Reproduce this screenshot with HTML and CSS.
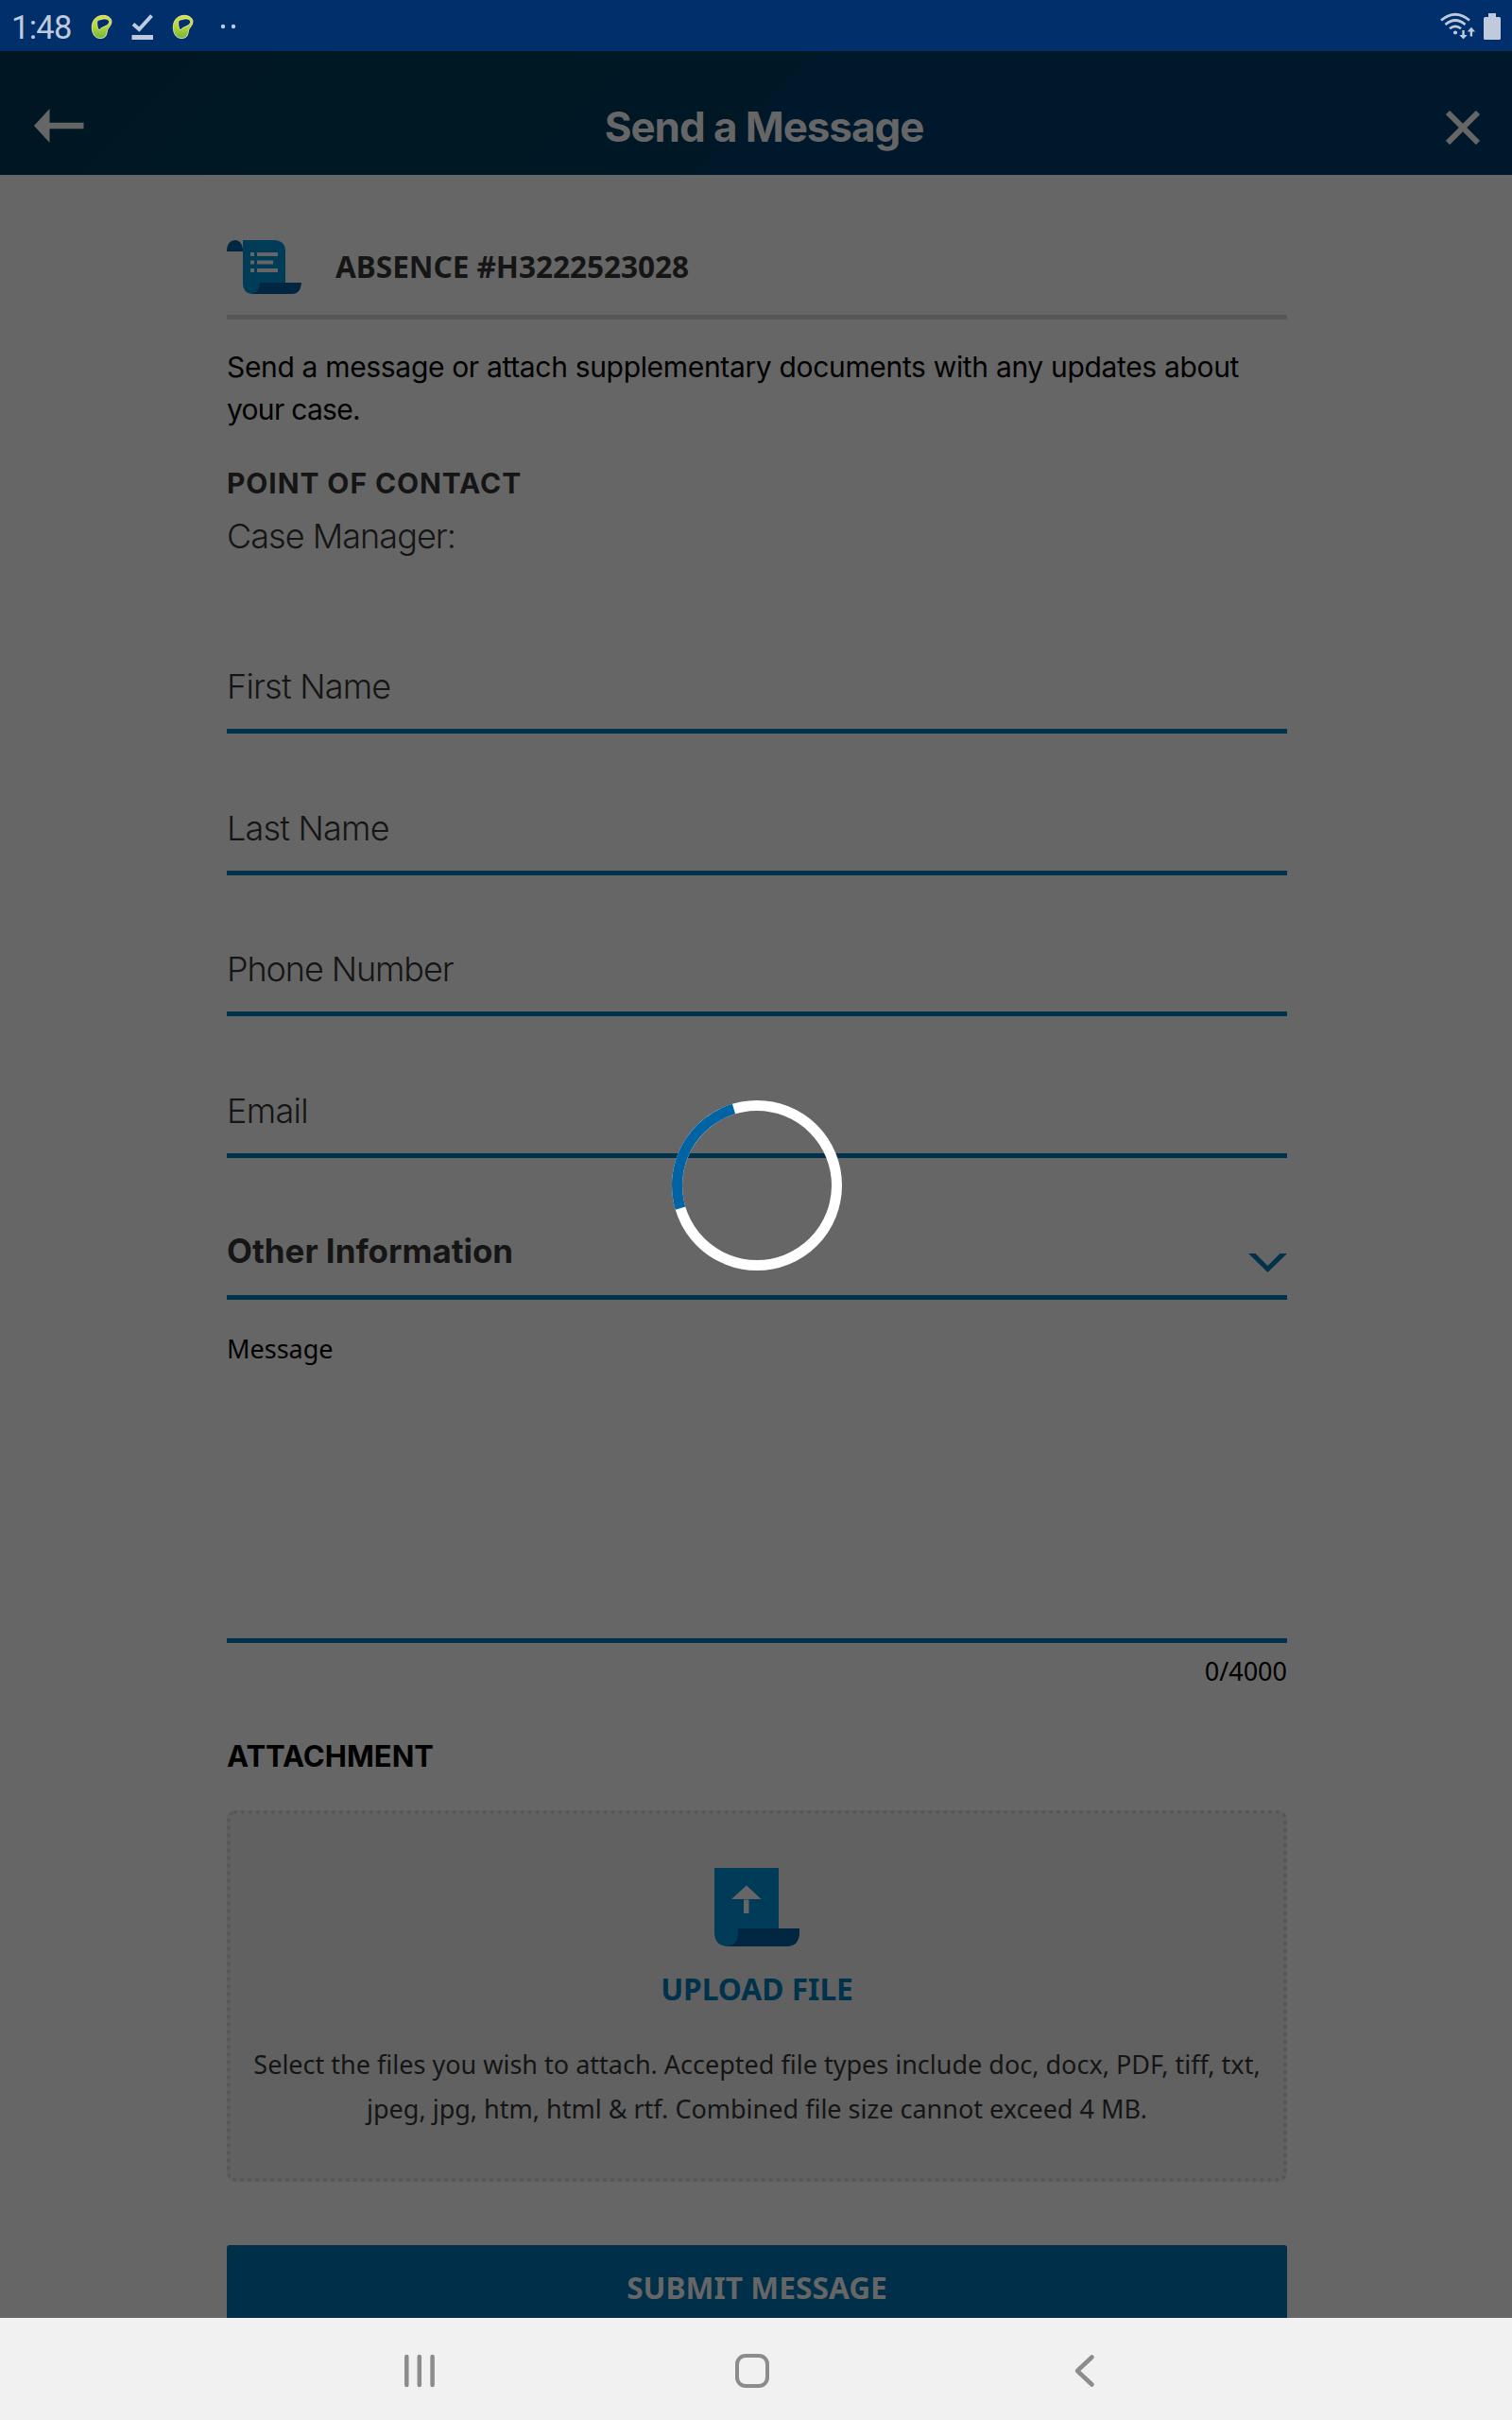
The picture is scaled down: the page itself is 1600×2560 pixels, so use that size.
FILE: index.html
```html
<!DOCTYPE html>
<html lang="en">
<head>
<meta charset="utf-8">
<title>Send a Message</title>
<link rel="stylesheet" href="styles.css">
</head>
<body>
<div class="screen">
  <div class="status">
    <span class="clock">1:48</span>
    <svg class="status-left" width="160" height="54" viewBox="90 0 160 54">
      <defs>
        <linearGradient id="lime" x1="0" y1="0" x2="0" y2="1"><stop offset="0" stop-color="#d8e13a"/><stop offset=".5" stop-color="#b5d334"/><stop offset="1" stop-color="#6fb744"/></linearGradient>
        <g id="loop">
          <path fill="url(#lime)" stroke="#f3f7c0" stroke-width=".8" fill-rule="evenodd" d="M107 16.500C112 15.500 118 18 118 23C118 27 114.500 29 113.500 32C113 37 112 40.500 106 40.500C100 40.500 97.300 35 97.300 29C97.300 22 101 17.500 107 16.500ZM103 21.500C102.300 25 102.500 29.500 105 32C107 28 114.800 28 115.600 23.500C115.800 20.500 112 19.500 109 20C107 20.500 105 21.200 103 21.500Z"/>
        </g>
      </defs>
      <use href="#loop"/>
      <use href="#loop" x="86"/>
      <path d="M141 25.500L147.300 31L160.500 16.500" fill="none" stroke="#bfcadd" stroke-width="4"/>
      <rect x="139.500" y="37" width="22.500" height="5" fill="#bfcadd"/>
      <circle cx="236" cy="28" r="2.200" fill="#bfcadd"/>
      <circle cx="247" cy="28" r="2.200" fill="#bfcadd"/>
    </svg>
    <svg class="status-right" width="80" height="54" viewBox="1520 0 80 54">
      <g fill="none" stroke="#bfcadd" stroke-width="2.700">
        <path d="M1525 21.500Q1540 9 1555 21.500"/>
        <path d="M1529.500 26Q1540 17 1550.500 26"/>
        <path d="M1534 30.300Q1540 25.500 1546 30.300"/>
      </g>
      <circle cx="1540" cy="34.500" r="2.100" fill="#bfcadd"/>
      <path fill="#bfcadd" d="M1547.300 32h2.400v5h3l-4.200 4.500-4.200-4.500h3zM1555.700 38.500h2.400v-5h3l-4.200-4.800-4.200 4.800h3z"/>
      <path fill="#bfcadd" d="M1575 14h8v4h3.500q1.500 0 1.500 1.500v21q0 1.500-1.500 1.500h-15q-1.500 0-1.500-1.500v-21q0-1.500 1.500-1.500h3.500z"/>
    </svg>
  </div>

  <header class="bar">
    <svg width="53" height="36" viewBox="0 0 53 36"><path fill="#666" d="M0 18L16.500 0v14.700H52.500v6.600H16.500V36z"/></svg>
    <h1>Send a Message</h1>
    <svg width="36" height="36" viewBox="0 0 36 36"><path d="M2 2L34 34M34 2L2 34" stroke="#666" stroke-width="6"/></svg>
  </header>

  <main class="content">
    <div class="case">
      <svg width="79" height="57" viewBox="0 0 79 57">
        <path fill="#003b58" d="M9 0H51Q62 1 62 12V46H36V57H27Q17 56 17 46V0z"/>
        <path fill="#002641" d="M0 12Q0 0 10 0Q17 2 17 12z"/>
        <path fill="#002641" d="M35 45H79Q78 57 69 57H26Q35 56 35 45z"/>
        <path fill="#666" d="M25 13h4v4h-4zM32 13h22v4H32zM25 21.500h4v4h-4zM32 21.500h17v4H32zM25 30h4v4h-4zM32 30h22v4H32z"/>
      </svg>
      <h2>ABSENCE #H3222523028</h2>
    </div>
    <p class="intro"><span class="intro-first">Send a message or attach supplementary documents with any updates about</span><br><span class="intro-last">your case.</span></p>
    <h3 class="contact-title">POINT OF CONTACT</h3>
    <p class="manager">Case Manager:</p>

    <form class="form">
      <div class="field">First Name</div>
      <div class="field">Last Name</div>
      <div class="field phone">Phone Number</div>
      <div class="field email">Email</div>
      <div class="field select">
        <span>Other Information</span>
        <svg width="41" height="20" viewBox="0 0 41 20"><path fill="#00324b" d="M0 0H7.500L20.500 13L33.500 0H41L20.500 20z"/></svg>
      </div>
      <div class="message">Message</div>
      <div class="counter">0/4000</div>
      <h3 class="attach-title">ATTACHMENT</h3>
      <div class="upload">
        <svg width="90" height="83" viewBox="0 0 90 83">
          <path fill="#003b58" d="M0 0H68V64H26V83H13Q1 82 0 70z"/>
          <path fill="#002641" d="M25 64H90V70Q89 82 78 83H13Q24 82 25 71z"/>
          <path fill="#666" d="M34 18.500L49.500 33H18zM31 33.500h5.500V48H31z"/>
        </svg>
        <strong>UPLOAD FILE</strong>
        <p>Select the files you wish to attach. Accepted file types include doc, docx, PDF, tiff, txt,<br>jpeg, jpg, htm, html &amp; rtf. Combined file size cannot exceed 4 MB.</p>
      </div>
      <div class="submit">SUBMIT MESSAGE</div>
    </form>
  </main>

  <nav class="nav">
    <svg width="1600" height="108" viewBox="0 2452 1600 108" fill="none" stroke="#8c8c8c" stroke-width="4.500" stroke-linecap="round">
      <path d="M430.300 2493V2523M443.800 2493V2523M457.600 2493V2523"/>
      <rect x="780" y="2492" width="32" height="32" rx="9" stroke-width="4"/>
      <path d="M1155.500 2493.500L1140 2508L1155.500 2522.500" stroke-linejoin="round"/>
    </svg>
  </nav>

  <svg class="spinner" width="182" height="182" viewBox="-91 -91 182 182" fill="none" stroke-width="11">
    <circle r="84.500" stroke="#fff"/>
    <path d="M-81 24.100A84.500 84.500 0 0 1 -24.500 -80.900" stroke="#0063a3"/>
  </svg>
</div>
</body>
</html>
```
FILE: styles.css
```css
* { box-sizing: border-box; }
body { margin: 0; background: #666; }
h1, h2, h3, p { margin: 0; }
svg { display: block; flex: none; }

.screen {
  position: relative;
  display: flex;
  flex-direction: column;
  width: 1600px;
  height: 2560px;
  overflow: hidden;
  background: #666;
  color: #151515;
  font-family: Inter, "Noto Sans", sans-serif;
  white-space: nowrap;
}

.status {
  display: flex;
  flex: none;
  align-items: center;
  height: 54px;
  padding-left: 12px;
  background: #002f6c;
}
.clock {
  width: 78px;
  padding-top: 4px;
  font: 34.5px/40px Roboto, sans-serif;
  letter-spacing: -0.7px;
  color: #bfcadd;
}
.status-right { margin-left: auto; }

.bar {
  display: flex;
  flex: none;
  justify-content: space-between;
  height: 131px;
  padding: 61px 34px 0 36px;
  background: linear-gradient(135deg, #001723 0%, #001725 49%, #00182b 51%, #00182c 100%);
}
.bar svg:last-child { margin-top: 2px; }
.bar h1 {
  height: 40px;
  margin: -1px 2px 0 0;
  font-size: 44px;
  font-weight: 700;
  line-height: 40px;
  letter-spacing: -1.07px;
  color: #666;
}

.content {
  flex: none;
  width: 1122px;
  height: 2267px;
  margin-left: 240px;
  overflow: hidden;
}

.case {
  display: flex;
  align-items: center;
  gap: 36px;
  height: 153px;
  padding-top: 47px;
  border-bottom: 5px solid #575753;
}
.case h2 {
  padding-bottom: 2px;
  font: 700 31.6px/40px "Noto Sans", sans-serif;
  letter-spacing: -0.05px;
}

.intro {
  margin-top: 28px;
  font-size: 30px;
  line-height: 45px;
  color: #000;
}
.intro-first { letter-spacing: -0.33px; }
.intro-last { letter-spacing: -0.7px; }

.contact-title {
  margin-top: 35px;
  font-size: 30px;
  line-height: 40px;
  letter-spacing: 0.9px;
}
.manager {
  margin-top: 16px;
  font-size: 36px;
  font-weight: 350;
  line-height: 40px;
  letter-spacing: -0.95px;
}

.form { margin-top: 39.3px; }
.field {
  display: flex;
  align-items: flex-end;
  height: 149.67px;
  padding-bottom: 25px;
  border-bottom: 5px solid #00324b;
  font-size: 36px;
  font-weight: 350;
  line-height: 40px;
  letter-spacing: -0.8px;
}
.field.phone { letter-spacing: -1.1px; }
.field.email { letter-spacing: -0.7px; }
.field.select {
  justify-content: space-between;
  height: 150px;
  padding-bottom: 24px;
  font-size: 35px;
  font-weight: 700;
  letter-spacing: -0.03px;
}
.select span { padding-bottom: 3px; }

.message {
  height: 363px;
  padding-top: 32px;
  border-bottom: 5px solid #00324b;
  font: 27px/40px "Noto Sans", sans-serif;
  color: #000;
}
.counter {
  margin-top: 10px;
  font: 27px/40px "Noto Sans", sans-serif;
  text-align: right;
  color: #000;
}
.attach-title {
  margin-top: 50px;
  font-size: 31px;
  line-height: 40px;
  color: #000;
}

.upload {
  display: flex;
  flex-direction: column;
  align-items: center;
  height: 393px;
  margin-top: 37px;
  padding-top: 57px;
  border: 4px dotted #565656;
  border-radius: 9px;
  background: #616161;
}
.upload strong {
  margin-top: 25px;
  font: 700 31.7px/40px "Noto Sans", sans-serif;
  color: #00324b;
}
.upload p {
  margin-top: 36px;
  font: 27px/47px "Noto Sans", sans-serif;
  text-align: center;
}

.submit {
  height: 90px;
  margin-top: 67px;
  border-radius: 3px;
  background: #003049;
  font: 700 31.7px/90px "Noto Sans", sans-serif;
  text-align: center;
  color: #666;
}

.nav {
  flex: none;
  height: 108px;
  background: #f1f1f1;
}

.spinner {
  position: absolute;
  left: 710px;
  top: 1163px;
}
```
